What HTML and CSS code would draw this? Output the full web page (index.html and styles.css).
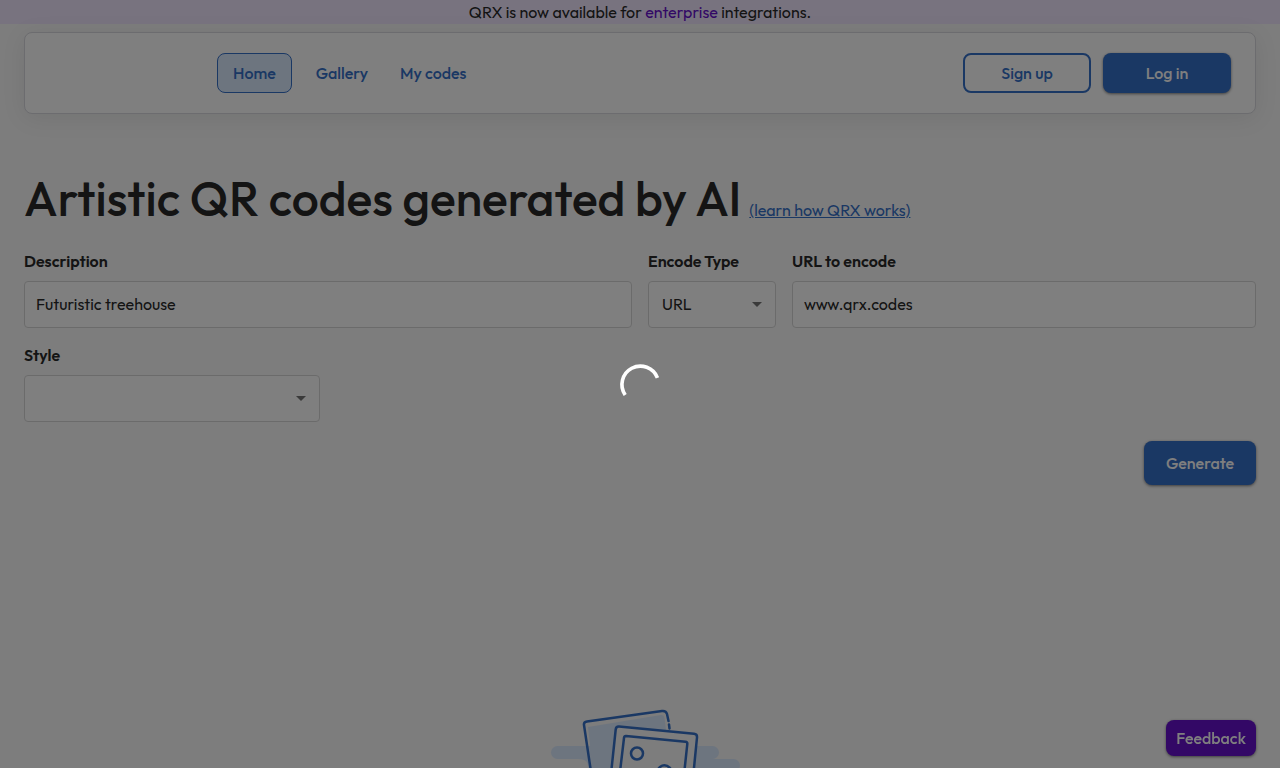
FILE: index.html
```html
<!DOCTYPE html>
<html lang="en">
<head>
    <meta charset="UTF-8">
    <meta name="viewport" content="width=device-width, initial-scale=1.0">
    <title>QRX</title>
    <link rel="stylesheet" href="styles.css">
</head>
<body>
    <div class="banner">QRX is now available for <a href="#enterprise">enterprise</a> integrations.</div>

    <header class="header">
        <nav class="nav">
            <a class="nav-link active" href="#home">Home</a>
            <a class="nav-link" href="#gallery">Gallery</a>
            <a class="nav-link" href="#codes">My codes</a>
        </nav>
        <div class="actions">
            <button type="button" class="button outlined">Sign up</button>
            <button type="button" class="button">Log in</button>
        </div>
    </header>

    <main class="main">
        <div class="title">
            <h1>Artistic QR codes generated by AI</h1>
            <a href="#how">(learn how QRX works)</a>
        </div>

        <form class="form">
            <div class="field wide">
                <label for="description">Description</label>
                <input type="text" id="description" value="Futuristic treehouse">
            </div>
            <div class="encode wide">
                <div class="field">
                    <label for="encodeType">Encode Type</label>
                    <div class="select">
                        <select id="encodeType">
                            <option>URL</option>
                        </select>
                        <svg class="arrow" viewBox="0 0 24 24"><path d="M7 10l5 5 5-5z"/></svg>
                    </div>
                </div>
                <div class="field">
                    <label for="url">URL to encode</label>
                    <input type="text" id="url" value="www.qrx.codes">
                </div>
            </div>
            <div class="field">
                <label for="style">Style</label>
                <div class="select">
                    <select id="style">
                        <option></option>
                    </select>
                    <svg class="arrow" viewBox="0 0 24 24"><path d="M7 10l5 5 5-5z"/></svg>
                </div>
            </div>
            <button type="button" class="button generate">Generate</button>
        </form>

        <!-- Empty state, shown until a code is generated -->
        <svg class="empty" viewBox="0 0 200 130">
            <g class="tint">
                <rect x="11" y="46" width="168" height="13" rx="6.5"/>
                <path d="M38 59Q48 59 48 66Q48 72 56 72H193.500A6.500 6.500 0 0 0 193.500 59Z"/>
                <path d="M48 27L121 15Q124 15 124.500 18L136 110L58 116Z"/>
            </g>
            <g class="line">
                <path d="M57 112L44 25Q43.500 22 47 21.400L122 11Q126 10.500 127 14L128.500 21M129 24.500L129.500 28.500"/>
                <path class="paper" d="M79 26.500L154 33.800Q157.300 34.200 157 37.500L149 118Q148.500 121 145 120.500L70 113Q67 112.500 67.300 109L75.700 29.500Q76 26.300 79 26.500Z"/>
                <path d="M86 36L145.500 41.800Q147.500 42 147.300 44L141 103L77 97L84 38Q84.200 35.900 86 36Z"/>
                <circle cx="97" cy="53.500" r="6"/>
                <path d="M79 88L93 76Q96 74 99 77L105 84L120 67Q125 63 130 68L144 83"/>
            </g>
        </svg>
    </main>

    <button type="button" class="button feedback">Feedback</button>

    <div class="backdrop">
        <svg class="spinner" viewBox="0 0 44 44" role="progressbar" aria-label="Loading">
            <path d="M5.700 34A20.200 20.200 0 1 1 41.200 15.300"/>
        </svg>
    </div>
</body>
</html>
```
FILE: styles.css
```css
* {
    box-sizing: border-box;
}
body {
    margin: 0;
    overflow: hidden;
    background: #fafafa;
    color: #292929;
    font-family: Outfit, Lato, sans-serif;
    font-size: 16px;
    line-height: 24px;
}
a {
    color: #3570c8;
}
.banner {
    background: #f0e6fe;
    text-align: center;
}
.banner a {
    color: #6610cc;
    text-decoration: none;
}
.header {
    display: flex;
    justify-content: space-between;
    align-items: center;
    margin: 8px 24px 0;
    padding: 20px 24px;
    border: 1px solid #d8d8de;
    border-radius: 8px;
    background: #fff;
    box-shadow: 0 4px 24px rgba(0, 20, 10, 0.08);
}
.nav {
    display: flex;
    margin-left: 168px;
}
.nav-link {
    padding: 7px 15px;
    border: 1px solid transparent;
    border-radius: 8px;
    font-weight: 500;
    text-decoration: none;
}
.nav-link.active {
    margin-right: 8px;
    border-color: #3570c8;
    background: #dbeafe;
}
.actions {
    display: flex;
    gap: 12px;
}
.button {
    width: 128px;
    height: 40px;
    padding: 0;
    border: 0;
    border-radius: 8px;
    background: #3570c8;
    color: #fff;
    font: inherit;
    font-weight: 500;
    box-shadow: 0 1px 3px rgba(0, 0, 0, 0.5);
}
.button.outlined {
    border: 2px solid #3570c8;
    background: none;
    color: #3570c8;
    box-shadow: none;
}
.main {
    padding: 54px 24px 0;
}
.title {
    display: flex;
    align-items: baseline;
    gap: 8px;
    margin-bottom: 21px;
}
h1 {
    margin: 0;
    font-size: 48px;
    font-weight: 500;
    line-height: 60px;
}
.form {
    display: grid;
    grid-template-columns: repeat(4, 1fr);
    gap: 15px 16px;
}
.wide {
    grid-column: span 2;
}
.encode {
    display: grid;
    grid-template-columns: 128px 1fr;
    gap: 16px;
}
.field label {
    display: block;
    margin-bottom: 8px;
    font-weight: 600;
}
.field input,
.field select {
    display: block;
    width: 100%;
    height: 47px;
    padding: 0 11px 2px;
    border: 1px solid #d6d6d6;
    border-radius: 4px;
    background: #fff;
    color: #292929;
    font: inherit;
}
.field select {
    appearance: none;
    padding: 0 13px 2px;
}
.select {
    position: relative;
}
.arrow {
    position: absolute;
    top: 11px;
    right: 7px;
    width: 24px;
    height: 24px;
    fill: #757575;
    pointer-events: none;
}
.generate {
    grid-column: 1 / -1;
    justify-self: end;
    width: 112px;
    height: 44px;
    margin-top: 4px;
}
.empty {
    display: block;
    width: 200px;
    height: 130px;
    margin: 215px auto 0;
}
.tint {
    fill: #dbeafe;
}
.line {
    fill: none;
    stroke: #3570c8;
    stroke-width: 2.5px;
    stroke-linecap: round;
}
.paper {
    fill: #fafafa;
}
.feedback {
    position: fixed;
    right: 24px;
    bottom: 12px;
    width: 90px;
    height: 36px;
    background: #6610cc;
}
.backdrop {
    position: fixed;
    inset: 0;
    display: flex;
    align-items: center;
    justify-content: center;
    background: rgba(0, 0, 0, 0.5);
}
.spinner {
    width: 40px;
    height: 40px;
    overflow: visible;
    fill: none;
    stroke: #fff;
    stroke-width: 4px;
}
```
